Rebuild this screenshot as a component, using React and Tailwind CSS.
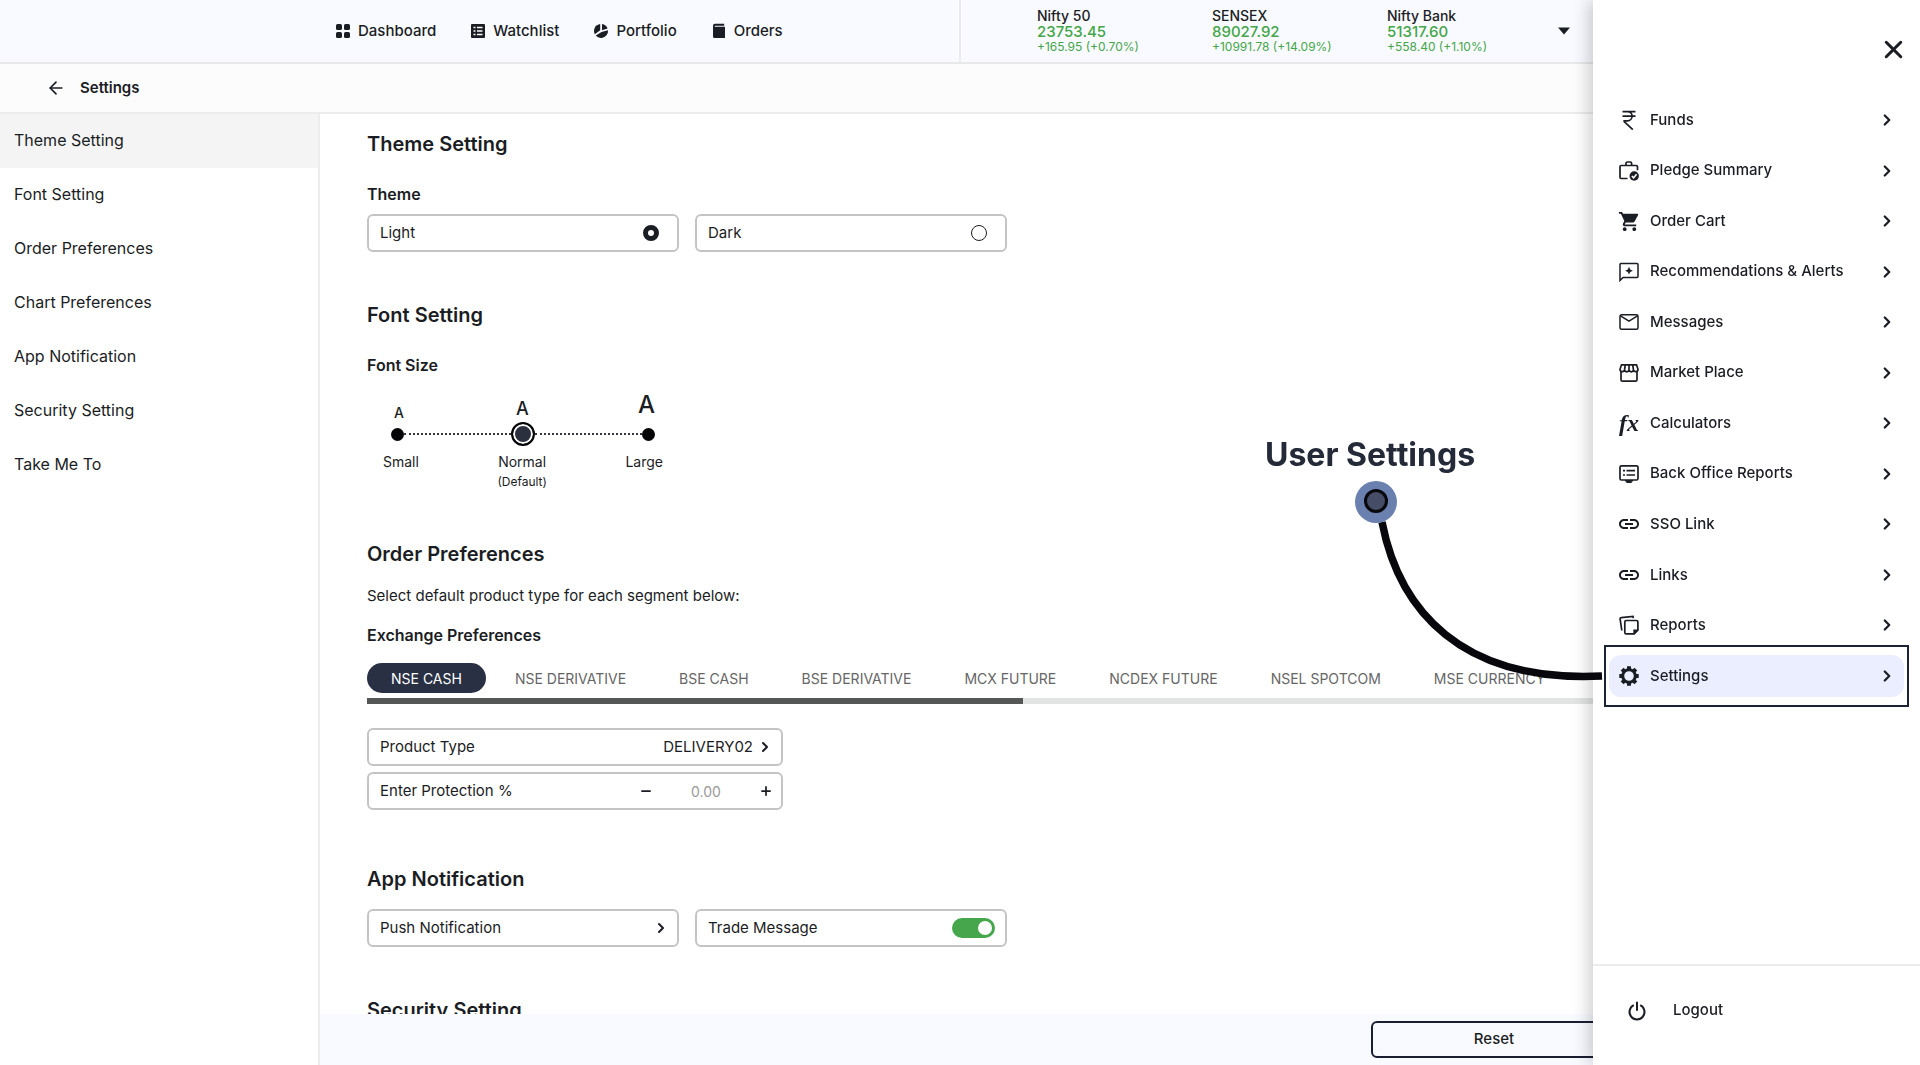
import { Fragment, useState } from 'react';
import { ArrowLeft, ChevronRight, Minus, Plus, X } from 'lucide-react';
import { MdLink, MdShoppingCart } from 'react-icons/md';

const DashboardIcon = () => (
  <svg viewBox="0 0 16 16" className="size-4" fill="currentColor">
    <rect x="1" y="1" width="6" height="6" rx="1.6" />
    <rect x="9" y="1" width="6" height="6" rx="1.6" />
    <rect x="1" y="9" width="6" height="6" rx="1.6" />
    <rect x="9" y="9" width="6" height="6" rx="1.6" />
  </svg>
);

const WatchlistIcon = () => (
  <svg viewBox="0 0 16 16" className="size-4">
    <rect x="1" y="1" width="14" height="14" rx="1" fill="currentColor" />
    <path d="M3.5 4.5h2M7 4.5h5.500M3.500 8h2M7 8h5.500M3.500 11.500h2M7 11.500h5.500" stroke="#fff" strokeWidth="1.3" />
  </svg>
);

const PortfolioIcon = () => (
  <svg viewBox="0 0 16 16" className="size-4" fill="currentColor">
    <path d="M7.200 1v6.300L1.800 11.200A7 7 0 0 1 7.200 1z" />
    <path d="M9 1.100a7 7 0 0 1 5.600 4.500L9 7.300z" />
    <path d="M15 7.200A7 7 0 0 1 8.800 14.900 7 7 0 0 1 2.700 12.600L8.600 8.900z" />
  </svg>
);

const OrdersIcon = () => (
  <svg viewBox="0 0 16 16" className="size-4">
    <path d="M4 .8h9.200v2H4.200c-.8 0-.8.900 0 .9H14V15H3.600A1.600 1.600 0 0 1 2 13.400V2.800a2 2 0 0 1 2-2z" fill="currentColor" />
  </svg>
);

const FundsIcon = () => (
  <svg viewBox="0 0 20 20" className="size-5" fill="none" stroke="currentColor" strokeWidth="1.700">
    <path d="M3.500 1.600h13M3.500 6.200h13M4 1.600h4.500a4.600 4.600 0 0 1 0 9.200H5.200v.8l8.600 8" />
  </svg>
);

const PledgeIcon = () => (
  <svg viewBox="0 0 20 20" className="size-5" fill="none" stroke="currentColor" strokeWidth="1.700">
    <path d="M8.500 17.500H2.200a1.200 1.200 0 0 1-1.200-1.200V5.700a1.200 1.200 0 0 1 1.200-1.200h15.100a1.200 1.200 0 0 1 1.200 1.200v3.600M7 4.500V2.300A1.300 1.300 0 0 1 8.300 1h3A1.300 1.300 0 0 1 12.600 2.300v2.200" />
    <circle cx="15.200" cy="15" r="4.700" fill="currentColor" stroke="none" />
    <path d="m12.800 15 1.800 1.800 3-3.500" stroke="#fff" strokeWidth="1.500" />
  </svg>
);

const CartIcon = () => <MdShoppingCart className="size-[23px] shrink-0" />;

const AlertsIcon = () => (
  <svg viewBox="0 0 20 20" className="size-5">
    <path d="M1 18.500V2.500A1 1 0 0 1 2 1.500h16a1 1 0 0 1 1 1v12a1 1 0 0 1-1 1H4z" fill="none" stroke="currentColor" strokeWidth="1.500" />
    <path d="M10 4.800 11.200 7.500 13.900 8.700 11.200 9.900 10 12.600 8.800 9.900 6.100 8.700 8.800 7.500z" fill="currentColor" />
  </svg>
);

const MessagesIcon = () => (
  <svg viewBox="0 0 20 20" className="size-5" fill="none" stroke="currentColor" strokeWidth="1.500">
    <rect x="1" y="2.800" width="18" height="14.400" rx="1.500" />
    <path d="m1.500 3.800 8.500 5.400 8.500-5.400" />
  </svg>
);

const MarketIcon = () => (
  <svg viewBox="0 0 20 20" className="size-5" fill="none" stroke="currentColor" strokeWidth="1.700">
    <path d="M2.500 1.800h15L19 6.300a2.300 2.300 0 0 1-4.500.7 2.300 2.300 0 0 1-4.500 0 2.300 2.300 0 0 1-4.500 0A2.300 2.300 0 0 1 1 6.300zM6.300 1.800 5.500 7M10 1.800V7M13.700 1.800l.8 5.200" />
    <path d="M2 8.500v8.300a1.400 1.400 0 0 0 1.400 1.400h13.200a1.400 1.400 0 0 0 1.400-1.400V8.500" />
  </svg>
);

const CalculatorsIcon = () => (
  <span aria-hidden="true" className="font-['Liberation_Serif',serif] text-[24px] leading-5 font-bold italic">
    fx
  </span>
);

const BackOfficeIcon = () => (
  <svg viewBox="0 0 20 20" className="size-5" fill="none" stroke="currentColor" strokeWidth="1.700">
    <rect x="1" y="1.800" width="18" height="14.200" rx="1.500" />
    <path d="M4 6.600h2M7.500 6.600H16M4 11h2M7.500 11H16" />
    <path d="M6 16h8v1.600h-1.300V19H7.300v-1.400H6z" fill="currentColor" stroke="none" />
  </svg>
);

const LinkIcon = () => <MdLink className="size-6 shrink-0" />;

const ReportsIcon = () => (
  <svg viewBox="0 0 20 20" className="size-5" fill="none" stroke="currentColor" strokeWidth="1.700">
    <path d="M14.300 3.200 14 1.400 2.200 2.600a1.200 1.200 0 0 0-1.100 1.400L2.800 15.500" />
    <path d="M7.200 5.500h10.300a1.400 1.400 0 0 1 1.400 1.400v8.300l-3.700 3.700h-8a1.400 1.400 0 0 1-1.400-1.400V6.900a1.400 1.400 0 0 1 1.400-1.400z" />
    <path d="M14.300 19.200v-4.700h4.900z" fill="currentColor" stroke="none" />
  </svg>
);

const SettingsIcon = () => (
  <svg viewBox="0 0 20 20" className="size-5" fill="none" stroke="currentColor">
    <circle cx="10" cy="10" r="6.300" strokeWidth="3" />
    <path
      d="M10 .3v3M10 16.700v3M.3 10h3M16.700 10h3M3.140 3.140l2.100 2.100M14.760 14.760l2.100 2.100M3.140 16.860l2.100-2.100M14.760 5.240l2.100-2.100"
      strokeWidth="4"
    />
  </svg>
);

const PowerIcon = () => (
  <svg viewBox="0 0 20 20" className="size-5" fill="none" stroke="currentColor" strokeWidth="2">
    <path d="M6.800 4.200a7.500 7.500 0 1 0 6.400 0" />
    <path d="M10 .8v9" />
  </svg>
);

const navItems = [
  { label: 'Dashboard', icon: DashboardIcon },
  { label: 'Watchlist', icon: WatchlistIcon },
  { label: 'Portfolio', icon: PortfolioIcon },
  { label: 'Orders', icon: OrdersIcon },
];

const indices = [
  { name: 'Nifty 50', value: '23753.45', change: '+165.95 (+0.70%)' },
  { name: 'SENSEX', value: '89027.92', change: '+10991.78 (+14.09%)' },
  { name: 'Nifty Bank', value: '51317.60', change: '+558.40 (+1.10%)' },
];

const sections = [
  'Theme Setting',
  'Font Setting',
  'Order Preferences',
  'Chart Preferences',
  'App Notification',
  'Security Setting',
  'Take Me To',
];

const segments = [
  'NSE CASH',
  'NSE DERIVATIVE',
  'BSE CASH',
  'BSE DERIVATIVE',
  'MCX FUTURE',
  'NCDEX FUTURE',
  'NSEL SPOTCOM',
  'MSE CURRENCY',
];

const menuItems = [
  { label: 'Funds', icon: FundsIcon },
  { label: 'Pledge Summary', icon: PledgeIcon },
  { label: 'Order Cart', icon: CartIcon },
  { label: 'Recommendations & Alerts', icon: AlertsIcon },
  { label: 'Messages', icon: MessagesIcon },
  { label: 'Market Place', icon: MarketIcon },
  { label: 'Calculators', icon: CalculatorsIcon },
  { label: 'Back Office Reports', icon: BackOfficeIcon },
  { label: 'SSO Link', icon: LinkIcon },
  { label: 'Links', icon: LinkIcon },
  { label: 'Reports', icon: ReportsIcon },
  { label: 'Settings', icon: SettingsIcon },
];

const boxClass = 'flex h-[38px] items-center justify-between rounded-md border-2 border-[#c4c4c4] pr-2 pl-[11px] text-[15px]';

function Header() {
  return (
    <header className="flex h-[64px] shrink-0 border-b-2 border-[#e8e8ea] bg-[#f9faff]">
      <nav className="flex w-[961px] items-center gap-[34px] border-r-2 border-[#ececf0] pl-[335px]">
        {navItems.map(({ label, icon: Icon }) => (
          <a key={label} href="#" className="flex items-center gap-[7px] text-[15px] font-medium">
            <Icon />
            {label}
          </a>
        ))}
      </nav>
      <div className="flex items-center pl-[76px]">
        {indices.map((index) => (
          <div key={index.name} className="w-[175px]">
            <div className="text-[14px] leading-4 font-medium">{index.name}</div>
            <div className="text-[15px] leading-4 font-medium text-[#43a648]">{index.value}</div>
            <div className="text-[12px] leading-[14px] text-[#43a648]">{index.change}</div>
          </div>
        ))}
        <button type="button" aria-label="More indices" className="-ml-1">
          <svg viewBox="0 0 12 8" className="h-2 w-3" fill="currentColor">
            <path d="M0 .5h12L6 7.500z" />
          </svg>
        </button>
      </div>
    </header>
  );
}

function Sidebar() {
  return (
    <aside className="w-[320px] shrink-0 border-r-2 border-[#ececec]">
      {sections.map((section, i) => (
        <a
          key={section}
          href="#"
          className={`flex h-[54px] items-center px-[14px] pb-[3px] text-[16px] ${i === 0 ? 'bg-[#f4f4f4]' : ''}`}
        >
          {section}
        </a>
      ))}
    </aside>
  );
}

function ThemeSetting() {
  const [theme, setTheme] = useState('Light');

  return (
    <section>
      <h2 className="text-[20px] leading-7 font-semibold">Theme Setting</h2>
      <h3 className="mt-6 text-[16px] leading-6 font-semibold">Theme</h3>
      <div className="mt-2 flex gap-4">
        {['Light', 'Dark'].map((name) => (
          <label key={name} className={`${boxClass} w-[312px]`}>
            {name}
            <input
              type="radio"
              name="theme"
              checked={theme === name}
              onChange={() => setTheme(name)}
              className="mr-[10px] size-4 appearance-none rounded-full border border-[#1b1d24] checked:border-[5px]"
            />
          </label>
        ))}
      </div>
    </section>
  );
}

function FontSetting() {
  const [size, setSize] = useState('normal');

  return (
    <section className="mt-[49px]">
      <h2 className="text-[20px] leading-7 font-semibold">Font Setting</h2>
      <h3 className="mt-6 text-[16px] leading-6 font-semibold">Font Size</h3>
      <div className="mt-3 w-[312px]">
        <div className="flex h-8 items-end justify-between px-6 font-medium">
          <span className="w-4 text-center text-[14px] leading-4">A</span>
          <span className="text-[18px] leading-6">A</span>
          <span className="text-[24px] leading-8">A</span>
        </div>
        <div className="mt-px flex h-6 items-center px-6">
          {['small', 'normal', 'large'].map((name, i) => (
            <Fragment key={name}>
              {i > 0 && <span className="flex-1 border-t-2 border-dotted border-[#33363f]" />}
              <input
                id={`font-${name}`}
                type="radio"
                name="font-size"
                checked={size === name}
                onChange={() => setSize(name)}
                className="size-[13px] shrink-0 appearance-none rounded-full bg-[#050508] checked:size-6 checked:border-2 checked:border-[#050508] checked:bg-[#2b303e] checked:shadow-[inset_0_0_0_2px_white]"
              />
            </Fragment>
          ))}
        </div>
        <div className="mt-1 flex justify-between px-4 text-[14px] leading-6">
          <label htmlFor="font-small">Small</label>
          <label htmlFor="font-normal" className="text-center">
            Normal
            <span className="block text-[12px] leading-4">(Default)</span>
          </label>
          <label htmlFor="font-large">Large</label>
        </div>
      </div>
    </section>
  );
}

function OrderPreferences() {
  return (
    <section className="mt-[50px]">
      <h2 className="text-[20px] leading-7 font-semibold">Order Preferences</h2>
      <p className="mt-4 text-[15px] leading-6">Select default product type for each segment below:</p>
      <h3 className="mt-[15px] text-[16px] leading-6 font-semibold">Exchange Preferences</h3>
      <div className="mt-4 flex gap-[5px] text-[14px] whitespace-nowrap">
        {segments.map((segment, i) => (
          <button
            key={segment}
            type="button"
            className={`h-[30px] rounded-full px-6 ${i === 0 ? 'bg-[#293044] text-white' : 'text-[#666]'}`}
          >
            {segment}
          </button>
        ))}
      </div>
      <div className="mt-[5px] h-[6px] bg-[#e2e4e3]">
        <div className="h-full w-[656px] bg-[#555756]" />
      </div>
      <div className="mt-6 flex w-[416px] flex-col gap-[6px]">
        <button type="button" className={boxClass}>
          Product Type
          <span className="flex items-center gap-1">
            DELIVERY02
            <ChevronRight size={16} strokeWidth={3} />
          </span>
        </button>
        <div className={boxClass}>
          <label htmlFor="protection">Enter Protection %</label>
          <span className="flex items-center">
            <button type="button" aria-label="Decrease">
              <Minus size={14} strokeWidth={3} />
            </button>
            <input
              id="protection"
              type="text"
              placeholder="0.00"
              className="w-[106px] text-center text-[14px] outline-none placeholder:text-[#999]"
            />
            <button type="button" aria-label="Increase">
              <Plus size={14} strokeWidth={3} />
            </button>
          </span>
        </div>
      </div>
    </section>
  );
}

function AppNotification() {
  const [tradeMessage, setTradeMessage] = useState(true);

  return (
    <section className="mt-[55px]">
      <h2 className="text-[20px] leading-7 font-semibold">App Notification</h2>
      <div className="mt-4 flex gap-4">
        <button type="button" className={`${boxClass} w-[312px]`}>
          Push Notification
          <ChevronRight size={16} strokeWidth={3} />
        </button>
        <label className={`${boxClass} w-[312px]`}>
          Trade Message
          <input
            type="checkbox"
            checked={tradeMessage}
            onChange={(e) => setTradeMessage(e.target.checked)}
            className="mr-[2px] flex h-5 w-[43px] appearance-none items-center rounded-full bg-gray-400 px-[3px] before:size-[14px] before:rounded-full before:bg-white checked:justify-end checked:bg-[#46a64b]"
          />
        </label>
      </div>
    </section>
  );
}

function Drawer() {
  return (
    <aside className="fixed inset-y-0 right-0 flex w-[327px] flex-col bg-white shadow-[-4px_0_16px_rgba(0,0,0,0.2)]">
      <button type="button" aria-label="Close" className="mt-[35px] mr-3 self-end">
        <X size={29} strokeWidth={2.5} />
      </button>
      <ul className="mt-[35px] flex h-[598px] flex-col justify-between px-4">
        {menuItems.map(({ label, icon: Icon }) => (
          <li key={label} className="relative">
            <a
              href="#"
              className={`flex h-[42px] items-center rounded-xl pr-2 pl-[10px] text-[15px] font-medium ${
                label === 'Settings' ? 'bg-[#ebeefe]' : ''
              }`}
            >
              <span className="flex w-5 justify-center">
                <Icon />
              </span>
              <span className="ml-[11px] flex-1">{label}</span>
              <ChevronRight size={18} strokeWidth={3} />
            </a>
            {label === 'Settings' && (
              <span className="pointer-events-none absolute -inset-x-[5px] -top-[10px] -bottom-[10px] border-2 border-[#1b2434]" />
            )}
          </li>
        ))}
      </ul>
      <button
        type="button"
        className="mt-auto flex h-[101px] items-center gap-[26px] border-t-2 border-[#ececec] pb-[10px] pl-[34px] text-[15px] font-medium"
      >
        <PowerIcon />
        Logout
      </button>
    </aside>
  );
}

// Callout pointing at the Settings entry of the drawer
function Callout() {
  return (
    <div className="pointer-events-none fixed top-[435px] right-[317px] w-[338px]">
      <p className="text-[32px] leading-10 font-bold whitespace-nowrap text-[#242a38]">User Settings</p>
      <svg viewBox="0 0 248 206" className="mt-[5px] ml-[90px] h-[206px] w-[248px]">
        <path d="M27 42C44 130 106 203 247 196" fill="none" stroke="#07070c" strokeWidth="7.500" />
        <circle cx="21" cy="22" r="21" fill="#6a80ae" />
        <circle cx="21" cy="21" r="10.500" fill="#454e66" stroke="#07070c" strokeWidth="3" />
      </svg>
    </div>
  );
}

export default function App() {
  return (
    <div className="flex h-screen flex-col overflow-hidden bg-white font-[Inter,sans-serif] text-[#1b1d24]">
      <Header />
      <div className="flex h-[50px] shrink-0 items-center gap-[14px] border-b-2 border-[#ececec] bg-[#fcfcfc] pl-[46px]">
        <button type="button" aria-label="Back">
          <ArrowLeft size={20} strokeWidth={2} />
        </button>
        <h1 className="text-[15px] font-semibold">Settings</h1>
      </div>
      <div className="flex min-h-0 flex-1">
        <Sidebar />
        <div className="flex min-w-0 flex-1 flex-col">
          <main className="min-h-0 flex-1 overflow-hidden pt-4 pl-[47px]">
            <ThemeSetting />
            <FontSetting />
            <OrderPreferences />
            <AppNotification />
            <section className="mt-[49px]">
              <h2 className="text-[20px] leading-7 font-semibold">Security Setting</h2>
            </section>
          </main>
          <footer className="flex h-[51px] shrink-0 items-center justify-end bg-[#f9faff] pr-[303px]">
            <button type="button" className="h-[37px] w-[246px] rounded-md border-2 border-[#1b1d33] text-[15px] font-medium">
              Reset
            </button>
          </footer>
        </div>
      </div>
      <Drawer />
      <Callout />
    </div>
  );
}
